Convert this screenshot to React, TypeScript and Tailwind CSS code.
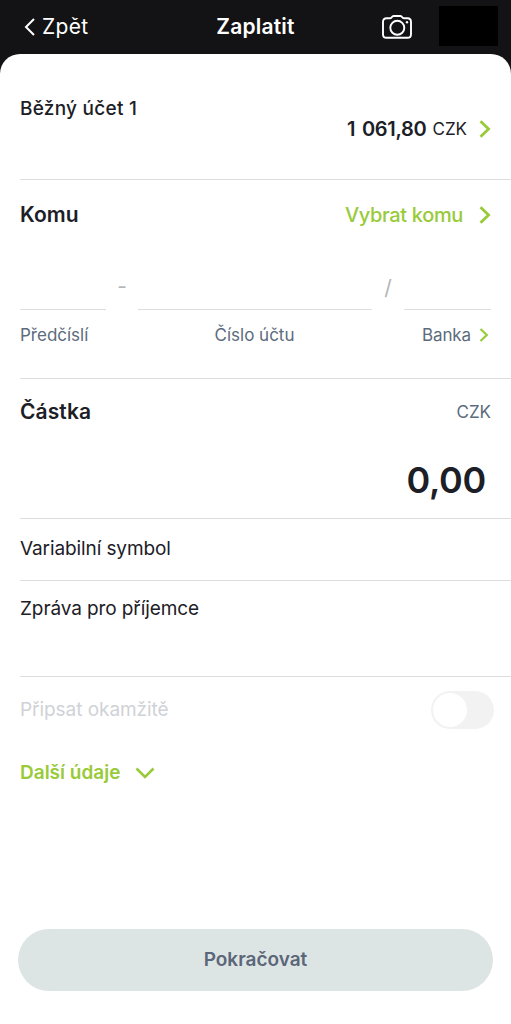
import React, { useState } from 'react';

type ChevronProps = {
  className?: string;
};

const ChevronRight: React.FC<ChevronProps> = ({ className }) => (
  <svg viewBox="0 0 12 18" fill="none" stroke="currentColor" strokeWidth="2.8" className={className}>
    <path d="M1.5 1.2 9.6 9l-8.1 7.8" />
  </svg>
);

const CameraIcon = () => (
  <svg width="30" height="24" viewBox="0 0 30 24" fill="none" stroke="currentColor" strokeWidth="1.9">
    <path d="M4.5 3.3h3.2c1 0 1.5-.4 2-1.1.5-.8 1-1.2 2-1.2h6.600c1 0 1.500.4 2 1.200.5.7 1 1.100 2 1.100h3.200c2.300 0 3.500 1.300 3.500 3.600v12.300c0 2.300-1.200 3.600-3.500 3.600h-21C2.200 22.800 1 21.500 1 19.200V6.900c0-2.300 1.200-3.600 3.500-3.600Z" />
    <circle cx="15.3" cy="12.8" r="7" />
    <circle cx="25" cy="7.3" r="1.2" fill="currentColor" stroke="none" />
  </svg>
);

type FieldProps = {
  label: string;
  className?: string;
};

const TextField: React.FC<FieldProps> = ({ label, className }) => (
  <div className={`ml-5 border-b border-[#dcdddf] ${className}`}>
    <span className="block text-[19px] leading-6 tracking-[-0.1px]">{label}</span>
  </div>
);

const App: React.FC = () => {
  const [instant, setInstant] = useState(false);

  return (
    <div className="flex h-[1024px] w-full flex-col overflow-hidden bg-[#131315] font-['Inter',sans-serif] text-[#1c2026]">
      {/* Header */}
      <header className="grid h-[54px] shrink-0 grid-cols-3 items-center text-white">
        <button className="flex items-center gap-[7px] pl-6 text-left text-[21px] leading-6 tracking-[0.3px]">
          <svg width="11" height="18" viewBox="0 0 11 18" fill="none" stroke="currentColor" strokeWidth="2">
            <path d="M10 1 2 9l8 8" />
          </svg>
          Zpět
        </button>
        <h1 className="text-center text-[21px] leading-6 font-semibold tracking-[0.2px]">Zaplatit</h1>
        <div className="flex items-center justify-end gap-[27px] pr-[13px]">
          <CameraIcon />
          <div className="-mt-0.5 h-10 w-[59px] bg-black" />
        </div>
      </header>

      <main className="flex flex-1 flex-col rounded-t-[20px] bg-white">
        {/* Account */}
        <section className="ml-5 h-[126px] border-b border-[#dcdddf] pt-[43px] pr-5">
          <div className="text-[19px] leading-6 font-medium tracking-[0.25px]">Běžný účet 1</div>
          <div className="-mt-1 flex items-center justify-end leading-6">
            <span className="text-[20px] font-semibold tracking-[-0.3px] [word-spacing:2px]">1 061,80</span>
            <span className="ml-1.5 text-[17px]">CZK</span>
            <ChevronRight className="ml-3 h-[18px] w-3 text-[#98ca3a]" />
          </div>
        </section>

        {/* Recipient */}
        <section className="ml-5 h-[199px] border-b border-[#dcdddf] pt-[23px] pr-5">
          <div className="flex items-center justify-between">
            <h2 className="text-[21px] leading-6 font-semibold">Komu</h2>
            <button className="flex items-center text-[20px] leading-6 font-medium tracking-[-0.35px] text-[#98ca3a]">
              Vybrat komu
              <ChevronRight className="ml-4 h-[18px] w-3" />
            </button>
          </div>
          <div className="mt-[47px] flex h-9 text-[21px] text-[#b4b5b8]">
            <div className="w-[86px] border-b border-[#dcdddf]" />
            <span className="w-8 text-center leading-[26px]">-</span>
            <div className="flex-1 border-b border-[#dcdddf]" />
            <span className="w-8 text-center leading-[28px]">/</span>
            <div className="w-[87px] border-b border-[#dcdddf]" />
          </div>
          <div className="mt-[13px] grid grid-cols-3 text-[17px] leading-6 text-[#5b6b7d]">
            <span>Předčíslí</span>
            <span className="pr-0.5 text-center">Číslo účtu</span>
            <span className="flex items-center justify-end pr-0.5 tracking-[-0.1px]">
              Banka
              <ChevronRight className="ml-2 h-[14px] w-[10px] text-[#98ca3a]" />
            </span>
          </div>
        </section>

        {/* Amount */}
        <section className="ml-5 h-[140px] border-b border-[#dcdddf] pt-[21px] pr-5">
          <div className="flex items-center justify-between">
            <h2 className="text-[21px] leading-6 font-semibold tracking-[0.1px]">Částka</h2>
            <span className="text-[17px] leading-6 text-[#5b6b7d]">CZK</span>
          </div>
          <div className="mt-9 pr-[5px] text-right text-[36px] leading-10 font-semibold tracking-[-0.3px]">0,00</div>
        </section>

        <TextField label="Variabilní symbol" className="h-[62px] pt-[18px]" />
        <TextField label="Zpráva pro příjemce" className="h-[96px] pt-4" />

        {/* Instant payment */}
        <div className="flex h-[66px] items-center justify-between pr-[17px] pl-5">
          <span className="text-[19px] leading-6 tracking-[-0.05px] text-[#cfd2d6]">Připsat okamžitě</span>
          <button
            onClick={() => setInstant(!instant)}
            className={`flex h-[38px] w-[63px] items-center rounded-full px-0.5 ${
              instant ? 'justify-end bg-[#98ca3a]' : 'justify-start bg-[#f2f2f2]'
            }`}
          >
            <span className="size-[34px] rounded-full bg-white" />
          </button>
        </div>

        <button className="mt-[18px] flex items-center pl-5 text-[19px] leading-6 font-semibold text-[#98ca3a]">
          Další údaje
          <svg width="20" height="12" viewBox="0 0 20 12" fill="none" stroke="currentColor" strokeWidth="2.6" className="ml-[15px]">
            <path d="M1.5 1.5 10 10l8.5-8.5" />
          </svg>
        </button>

        <div className="mt-auto px-[18px] pb-[33px]">
          <button className="h-[62px] w-full rounded-full bg-[#dde5e4] text-[19px] font-semibold text-[#5b6678]">
            Pokračovat
          </button>
        </div>
      </main>
    </div>
  );
};

export default App;
